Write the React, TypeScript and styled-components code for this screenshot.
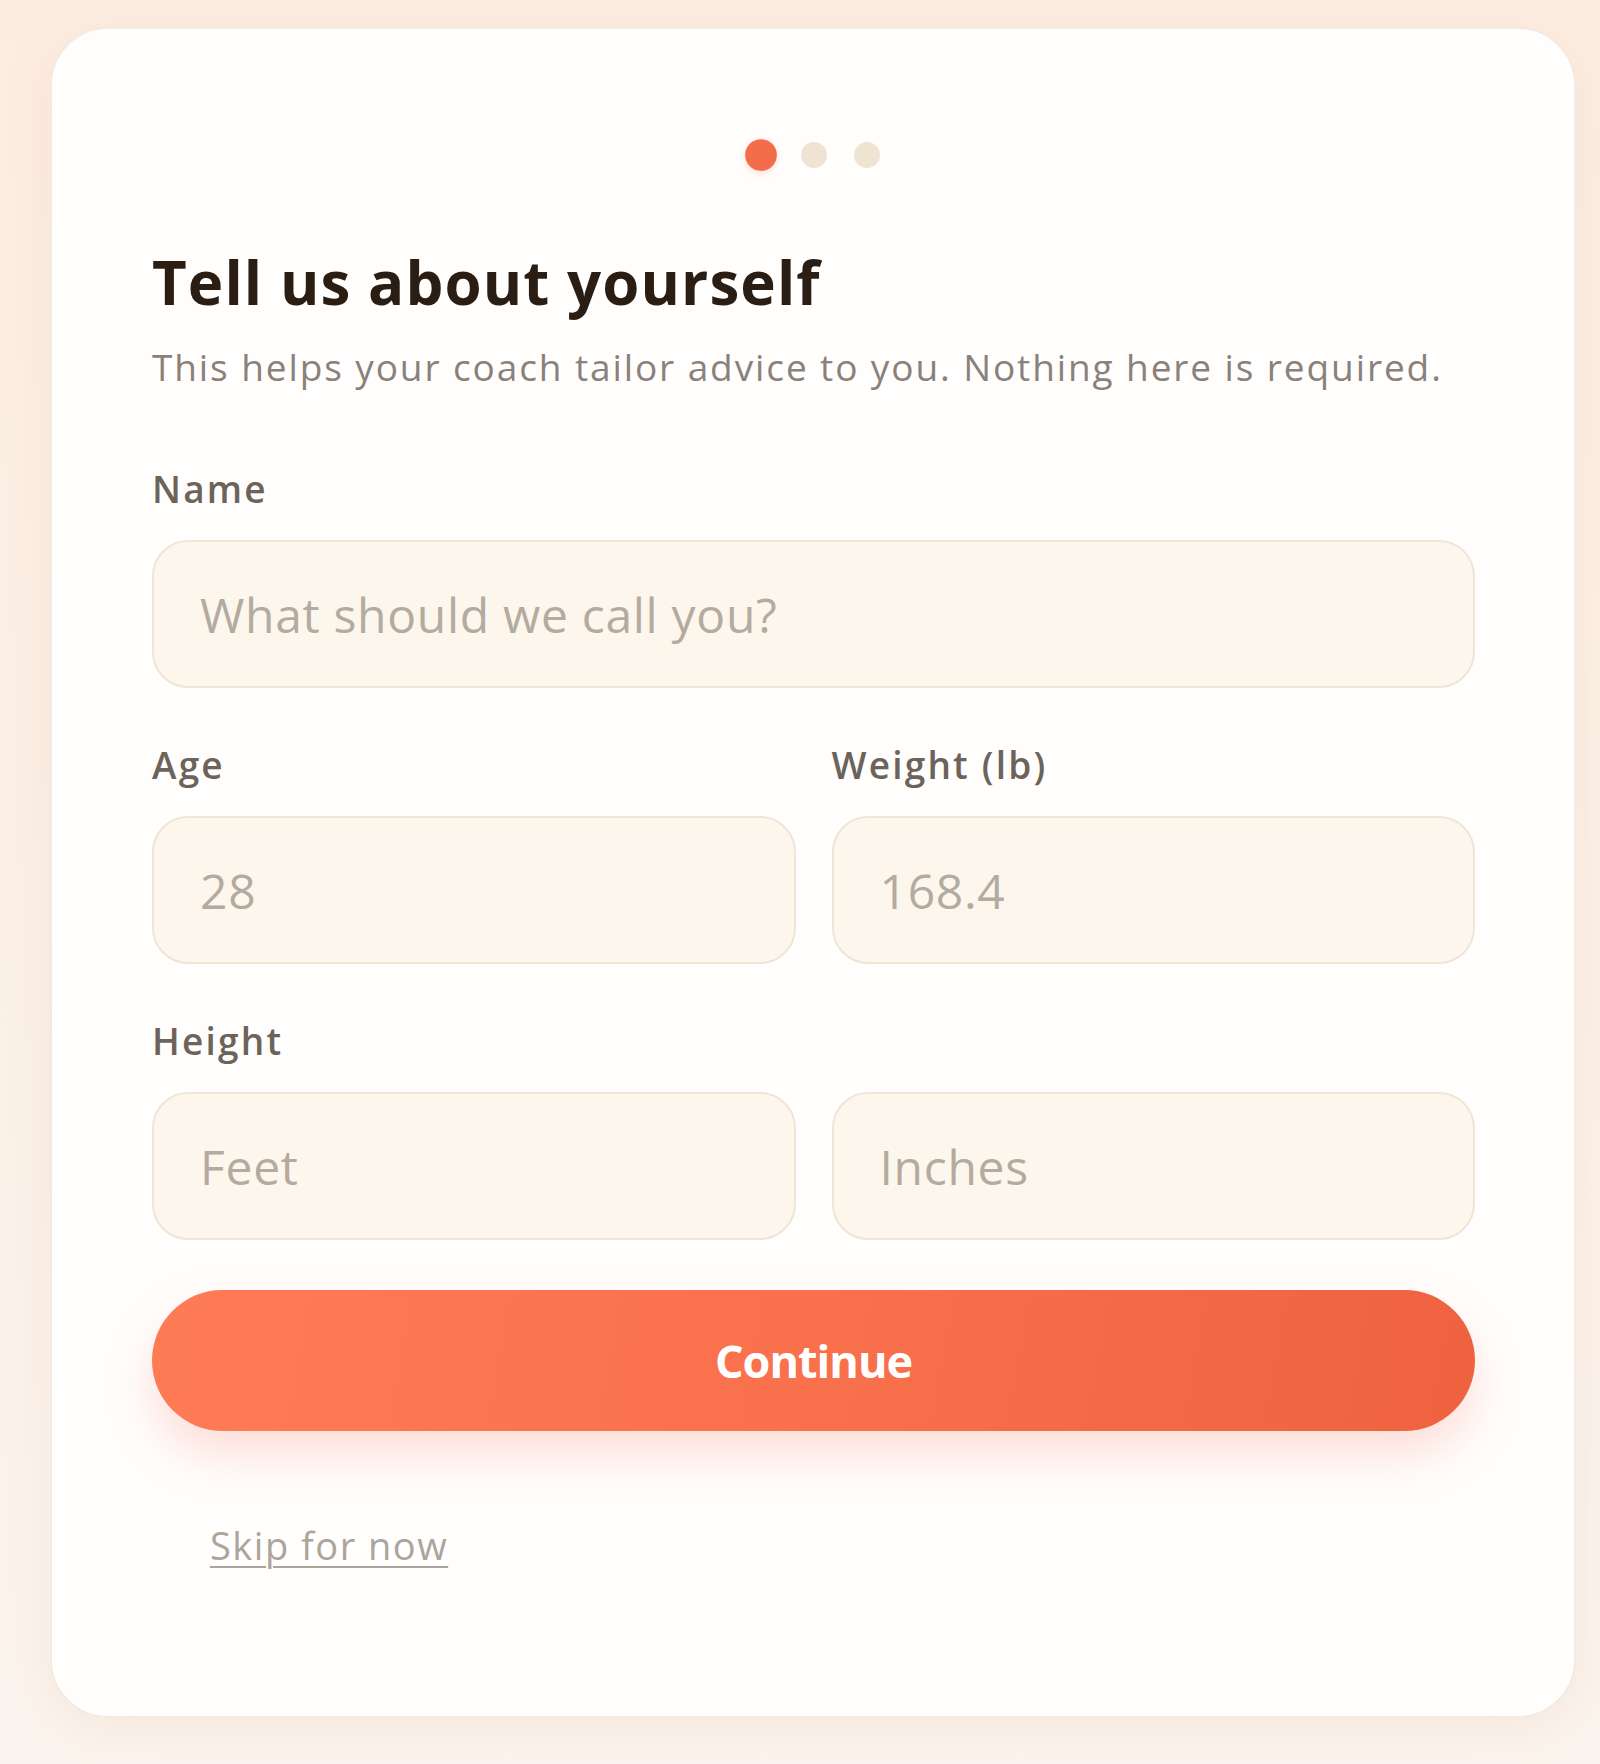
import React from "react";
import styled, { createGlobalStyle } from "styled-components";

const GlobalStyle = createGlobalStyle`
  html, body {
    margin: 0;
    padding: 0;
  }
  body {
    background: linear-gradient(180deg, #fcece0 0%, #fbf1e8 60%, #fbf4ee 100%);
    font-family: "Open Sans", "Noto Sans", sans-serif;
    min-height: 1764px;
  }
  * {
    box-sizing: border-box;
  }
`;

const Page = styled.div`
  padding: 27px 24px 47px 50px;
`;

const Card = styled.div`
  background: #fffefd;
  border: 2px solid #f3ebe1;
  border-radius: 58px;
  box-shadow: 0 12px 50px rgba(214, 160, 120, 0.12);
  padding: 110px 99px 152px 100px;
  display: flex;
  flex-direction: column;
`;

const Steps = styled.div`
  display: flex;
  align-items: center;
  justify-content: center;
  gap: 27px;
  height: 32px;
`;

const Dot = styled.span<{ $active?: boolean }>`
  width: 26px;
  height: 26px;
  border-radius: 50%;
  background: ${({ $active }) => ($active ? "#f36d4a" : "#efe3d1")};
  transform: ${({ $active }) => ($active ? "scale(1.22)" : "none")};
  box-shadow: ${({ $active }) => ($active ? "0 2px 6px rgba(243, 109, 74, 0.22)" : "none")};
`;

const Title = styled.h1`
  margin: 81px 0 0;
  font-size: 60px;
  line-height: 60px;
  font-weight: 700;
  letter-spacing: 1.1px;
  color: #2a1d14;
`;

const Subtitle = styled.p`
  margin: 37px 0 0;
  font-size: 37px;
  line-height: 36px;
  letter-spacing: 1.9px;
  color: #89817a;
`;

const Fields = styled.div`
  margin-top: 86px;
  display: flex;
  flex-direction: column;
  gap: 59px;
`;

const Field = styled.div`
  display: flex;
  flex-direction: column;
`;

const Label = styled.label`
  font-size: 37px;
  line-height: 36px;
  font-weight: 600;
  letter-spacing: 2.2px;
  color: #6c645b;
  margin-bottom: 33px;
`;

const Row = styled.div`
  display: grid;
  grid-template-columns: 1fr 1fr;
  gap: 36px;
`;

const Input = styled.input`
  width: 100%;
  height: 148px;
  border: 2px solid #efe5d7;
  border-radius: 36px;
  background: #fdf6ec;
  padding: 0 46px;
  font-family: "Open Sans", "Noto Sans", sans-serif;
  font-size: 48px;
  letter-spacing: 0.7px;
  color: #3a2f27;
  outline: none;

  &::placeholder {
    color: #b4aba0;
  }
`;

const PrimaryButton = styled.button`
  margin-top: 50px;
  height: 141px;
  border: none;
  border-radius: 999px;
  background: linear-gradient(100deg, #ff7b56 0%, #f86f4b 55%, #ee623f 100%);
  box-shadow: 0 24px 48px rgba(244, 110, 80, 0.22);
  color: #ffffff;
  font-family: "Open Sans", "Noto Sans", sans-serif;
  font-size: 45px;
  font-weight: 700;
  letter-spacing: -1px;
  cursor: pointer;
`;

const SkipLink = styled.button`
  align-self: flex-start;
  margin: 95px 0 0 58px;
  padding: 0;
  border: none;
  background: none;
  font-family: "Open Sans", "Noto Sans", sans-serif;
  font-size: 38px;
  line-height: 38px;
  letter-spacing: 1.5px;
  color: #aca59b;
  text-decoration: underline;
  text-underline-offset: 6px;
  text-decoration-thickness: 2px;
  cursor: pointer;
`;

const App = () => {
  const steps = [true, false, false];

  return (
    <>
      <GlobalStyle />
      <Page>
        <Card>
          <Steps>
            {steps.map((active, i) => (
              <Dot key={i} $active={active} />
            ))}
          </Steps>
          <Title>Tell us about yourself</Title>
          <Subtitle>This helps your coach tailor advice to you. Nothing here is required.</Subtitle>

          <Fields>
            <Field>
              <Label htmlFor="name">Name</Label>
              <Input id="name" placeholder="What should we call you?" />
            </Field>

            <Row>
              <Field>
                <Label htmlFor="age">Age</Label>
                <Input id="age" placeholder="28" />
              </Field>
              <Field>
                <Label htmlFor="weight">Weight (lb)</Label>
                <Input id="weight" placeholder="168.4" />
              </Field>
            </Row>

            <Field>
              <Label>Height</Label>
              <Row>
                <Input placeholder="Feet" />
                <Input placeholder="Inches" />
              </Row>
            </Field>
          </Fields>

          <PrimaryButton>Continue</PrimaryButton>
          <SkipLink>Skip for now</SkipLink>
        </Card>
      </Page>
    </>
  );
};

export default App;
